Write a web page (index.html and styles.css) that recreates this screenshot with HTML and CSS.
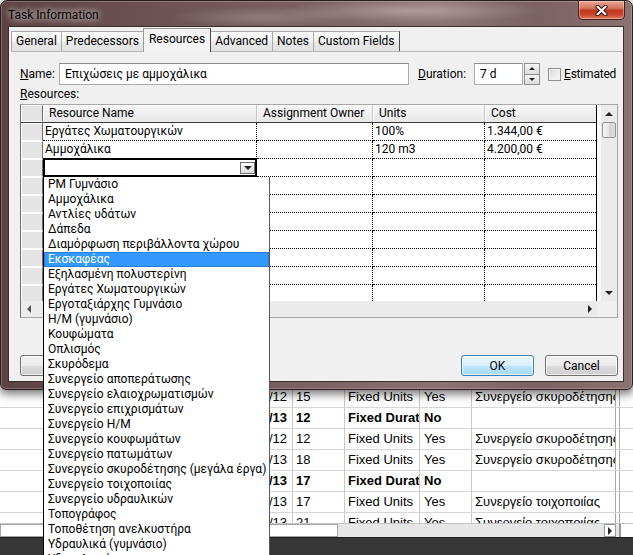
FILE: index.html
```html
<!DOCTYPE html>
<html lang="el">
<head>
<meta charset="utf-8">
<title>Task Information</title>
<link rel="stylesheet" href="styles.css">
</head>
<body>
<div class="desk">
  <div class="bg">
    <div class="bg-cover"></div>
    <div class="bg-grid">
      <div class="bg-row"><span class="b0"></span><span class="b1">3/12/12</span><span class="b2">15</span><span class="b3">Fixed Units</span><span class="b4">Yes</span><span class="b5">Συνεργείο σκυροδέτησης</span><span class="b6"></span><span class="b7"></span></div>
      <div class="bg-row bold"><span class="b0"></span><span class="b1">14/1/13</span><span class="b2">12</span><span class="b3">Fixed Duration</span><span class="b4">No</span><span class="b5"></span><span class="b6"></span><span class="b7"></span></div>
      <div class="bg-row"><span class="b0"></span><span class="b1">12/12/12</span><span class="b2">12</span><span class="b3">Fixed Units</span><span class="b4">Yes</span><span class="b5">Συνεργείο σκυροδέτησης</span><span class="b6"></span><span class="b7"></span></div>
      <div class="bg-row"><span class="b0"></span><span class="b1">7/1/13</span><span class="b2">18</span><span class="b3">Fixed Units</span><span class="b4">Yes</span><span class="b5">Συνεργείο σκυροδέτησης</span><span class="b6"></span><span class="b7"></span></div>
      <div class="bg-row bold"><span class="b0"></span><span class="b1">5/2/13</span><span class="b2">17</span><span class="b3">Fixed Duration</span><span class="b4">No</span><span class="b5"></span><span class="b6"></span><span class="b7"></span></div>
      <div class="bg-row"><span class="b0"></span><span class="b1">11/2/13</span><span class="b2">17</span><span class="b3">Fixed Units</span><span class="b4">Yes</span><span class="b5">Συνεργείο τοιχοποιίας</span><span class="b6"></span><span class="b7"></span></div>
      <div class="bg-row"><span class="b0"></span><span class="b1">4/3/13</span><span class="b2">21</span><span class="b3">Fixed Units</span><span class="b4">Yes</span><span class="b5">Συνεργείο τοιχοποιίας</span><span class="b6"></span><span class="b7"></span></div>
    </div>
    <div class="bg-hscroll"><span class="bh-thumb"></span><span class="bh-track"></span><span class="bh-btn"><i class="tri-r"></i></span><span class="bh-gap"></span><span class="bh-end"></span></div>
    <div class="bg-status"></div>
  </div>

  <div class="dialog">
    <div class="titlebar">
      <span class="title">Task Information</span>
      <div class="close">
        <svg width="13" height="11" viewBox="0 0 13 11"><path d="M2.5 1.8 L10.5 9.2 M10.5 1.8 L2.5 9.2" stroke="#3d1710" stroke-width="4.2" stroke-linecap="round"/><path d="M2.5 1.8 L10.5 9.2 M10.5 1.8 L2.5 9.2" stroke="#ffffff" stroke-width="2.2" stroke-linecap="round"/></svg>
      </div>
    </div>
    <div class="client">
      <div class="tabs">
        <span class="tab">General</span>
        <span class="tab">Predecessors</span>
        <span class="tab active">Resources</span>
        <span class="tab">Advanced</span>
        <span class="tab">Notes</span>
        <span class="tab">Custom Fields</span>
      </div>
      <div class="panel">
        <div class="name-row">
          <span class="lbl-name"><u>N</u>ame:</span>
          <span class="inp inp-name">Επιχώσεις με αμμοχάλικα</span>
          <span class="lbl-dur"><u>D</u>uration:</span>
          <span class="inp inp-dur">7 d</span>
          <span class="spin"><span class="spin-btn"><i class="tri-su"></i></span><span class="spin-btn"><i class="tri-sd"></i></span></span>
          <span class="chk"></span>
          <span class="lbl-est"><u>E</u>stimated</span>
        </div>
        <div class="res-label"><u>R</u>esources:</div>
        <div class="table">
          <div class="t-main">
            <div class="grid">
              <div class="hdr">
                <span class="sel"></span>
                <span class="hc cn">Resource Name</span>
                <span class="hc co">Assignment Owner</span>
                <span class="hc cu">Units</span>
                <span class="hc cc">Cost</span>
              </div>
              <div class="row"><span class="sel"></span><span class="cell cn">Εργάτες Χωματουργικών</span><span class="cell co"></span><span class="cell cu">100%</span><span class="cell cc">1.344,00 €</span></div>
              <div class="row"><span class="sel"></span><span class="cell cn">Αμμοχάλικα</span><span class="cell co"></span><span class="cell cu">120 m3</span><span class="cell cc">4.200,00 €</span></div>
              <div class="row"><span class="sel"></span><span class="cell cn edit"><span class="combo-btn"><i class="tri-d"></i></span></span><span class="cell co"></span><span class="cell cu"></span><span class="cell cc"></span></div>
              <div class="row"><span class="sel"></span><span class="cell cn"></span><span class="cell co"></span><span class="cell cu"></span><span class="cell cc"></span></div>
              <div class="row"><span class="sel"></span><span class="cell cn"></span><span class="cell co"></span><span class="cell cu"></span><span class="cell cc"></span></div>
              <div class="row"><span class="sel"></span><span class="cell cn"></span><span class="cell co"></span><span class="cell cu"></span><span class="cell cc"></span></div>
              <div class="row"><span class="sel"></span><span class="cell cn"></span><span class="cell co"></span><span class="cell cu"></span><span class="cell cc"></span></div>
              <div class="row"><span class="sel"></span><span class="cell cn"></span><span class="cell co"></span><span class="cell cu"></span><span class="cell cc"></span></div>
              <div class="row"><span class="sel"></span><span class="cell cn"></span><span class="cell co"></span><span class="cell cu"></span><span class="cell cc"></span></div>
              <div class="row"><span class="sel"></span><span class="cell cn"></span><span class="cell co"></span><span class="cell cu"></span><span class="cell cc"></span></div>
            </div>
            <div class="vscroll">
              <span class="vs-btn"><i class="tri-u"></i></span>
              <span class="vs-thumb"></span>
              <span class="vs-track"></span>
              <span class="vs-btn"><i class="tri-d"></i></span>
            </div>
          </div>
          <div class="hscroll">
            <span class="hs-btn"><i class="tri-l"></i></span>
            <span class="hs-track"></span>
            <span class="hs-btn"><i class="tri-r"></i></span>
            <span class="hs-corner"></span>
          </div>
        </div>
      </div>
      <div class="btns">
        <span class="btn btn-help"></span>
        <span class="btn btn-ok">OK</span>
        <span class="btn">Cancel</span>
      </div>
    </div>
  </div>

  <div class="dropdown">
    <div class="dd-item">PM Γυμνάσιο</div>
    <div class="dd-item">Αμμοχάλικα</div>
    <div class="dd-item">Αντλίες υδάτων</div>
    <div class="dd-item">Δάπεδα</div>
    <div class="dd-item">Διαμόρφωση περιβάλλοντα χώρου</div>
    <div class="dd-item hl">Εκσκαφέας</div>
    <div class="dd-item">Εξηλασμένη πολυστερίνη</div>
    <div class="dd-item">Εργάτες Χωματουργικών</div>
    <div class="dd-item">Εργοταξιάρχης Γυμνάσιο</div>
    <div class="dd-item">Η/Μ (γυμνάσιο)</div>
    <div class="dd-item">Κουφώματα</div>
    <div class="dd-item">Οπλισμός</div>
    <div class="dd-item">Σκυρόδεμα</div>
    <div class="dd-item">Συνεργείο αποπεράτωσης</div>
    <div class="dd-item">Συνεργείο ελαιοχρωματισμών</div>
    <div class="dd-item">Συνεργείο επιχρισμάτων</div>
    <div class="dd-item">Συνεργείο Η/Μ</div>
    <div class="dd-item">Συνεργείο κουφωμάτων</div>
    <div class="dd-item">Συνεργείο πατωμάτων</div>
    <div class="dd-item">Συνεργείο σκυροδέτησης (μεγάλα έργα)</div>
    <div class="dd-item">Συνεργείο τοιχοποιίας</div>
    <div class="dd-item">Συνεργείο υδραυλικών</div>
    <div class="dd-item">Τοπογράφος</div>
    <div class="dd-item">Τοποθέτηση ανελκυστήρα</div>
    <div class="dd-item">Υδραυλικά (γυμνάσιο)</div>
    <div class="dd-item">Υδραυλικοί</div>
  </div>
</div>
</body>
</html>
```

FILE: styles.css
```css
* { box-sizing: border-box; }
html, body { margin: 0; padding: 0; }
body {
  width: 633px; height: 555px; overflow: hidden; background: #fff;
  font-family: Roboto, "Noto Sans", "DejaVu Sans", sans-serif;
  font-size: 12px; color: #000;
}
i { display: block; font-style: normal; }
.desk { position: relative; width: 633px; height: 555px; overflow: hidden; }

/* ---------- background sheet ---------- */
.bg { display: flex; flex-direction: column; height: 555px; font-family: "Liberation Sans", Arial, sans-serif; font-size: 13px; }
.bg-cover { height: 387px; flex: none; background: #fff; }
.bg-grid { height: 136px; flex: none; overflow: hidden; }
.bg-row { display: flex; height: 21px; border-bottom: 1px solid #d6d6d6; line-height: 20px; white-space: nowrap; }
.bg-row span { overflow: hidden; flex: none; }
.bg-row.bold span { font-weight: bold; }
.b0 { width: 200px; }
.b1 { width: 93px; border-right: 1px solid #c8c8c8; text-align: right; padding-right: 5px; }
.b2 { width: 52px; border-right: 1px solid #c8c8c8; padding-left: 3px; }
.b3 { width: 75px; border-right: 1px solid #c8c8c8; padding-left: 3px; }
.b4 { width: 52px; border-right: 1px solid #c8c8c8; padding-left: 4px; }
.b5 { width: 144px; border-right: 1px solid #a8a8a8; padding-left: 3px; }
.b6 { width: 4px; border-right: 1px solid #a8a8a8; }
.b7 { width: 13px; }
.bg-hscroll { display: flex; height: 14px; flex: none; background: #e6e6e6; border-top: 1px solid #c4c4c4; }
.bh-thumb { width: 338px; background: #fff; border: 1px solid #a6a6a6; }
.bh-track { flex: 1; }
.bh-btn { width: 12px; background: #fff; border: 1px solid #9a9a9a; display: flex; align-items: center; justify-content: center; }
.bh-gap { width: 4px; border-right: 1px solid #9a9a9a; }
.bh-end { width: 13px; background: #fff; border-left: 1px solid #9a9a9a; }
.bg-status { flex: 1; background: #363636; border-top: 1px solid #1c1c1c; }

/* ---------- dialog window ---------- */
.dialog {
  position: absolute; left: 0; top: 0; width: 633px; height: 390px;
  display: flex; flex-direction: column;
  padding: 0 8px 7px 7px;
  border: 1px solid #2b1d1d; border-radius: 7px 7px 6px 6px;
  background:
    radial-gradient(130px 12px at 410px 10px, rgba(255,236,236,.35), transparent),
    radial-gradient(90px 10px at 260px 16px, rgba(255,230,230,.22), transparent),
    linear-gradient(90deg, #5c4242 0%, #6d5353 25%, #7c6262 50%, #8c7272 70%, #7c6262 85%, #8c7171 100%);
  box-shadow: 0 3px 10px 1px rgba(0,0,0,.55), inset 0 0 0 1px rgba(255,255,255,.22);
}
.titlebar { height: 25px; flex: none; display: flex; align-items: flex-start; }
.title { padding-top: 6px; line-height: 16px; text-shadow: 0 0 6px rgba(255,255,255,.9), 0 0 10px rgba(255,255,255,.6); }
.close {
  margin-left: auto; margin-right: -1px; width: 47px; height: 19px;
  border: 1px solid #45221b; border-top: none; border-radius: 0 0 5px 5px;
  background: linear-gradient(#e7a795 0%, #d5745f 40%, #c0391f 52%, #c8442b 75%, #e07a5b 100%);
  display: flex; align-items: center; justify-content: center;
  box-shadow: inset 0 0 0 1px rgba(255,255,255,.35);
}
.client {
  flex: 1; display: flex; flex-direction: column;
  background: #f0f0f0; border: 1px solid #3e2c2c;
}

/* tabs */
.tabs { height: 24px; flex: none; display: flex; align-items: flex-end; padding-left: 2px; }
.tab {
  height: 20px; padding: 0 4px; line-height: 19px; white-space: nowrap;
  border: 1px solid #a9a9a9; border-bottom: none; border-right-color: #4d4d4d;
  margin-right: -1px;
  background: linear-gradient(#fbfbfb, #f1f1f1 50%, #e8e8e8 51%, #e1e1e1);
}
.tab.active {
  height: 24px; margin-bottom: -1px; line-height: 21px; position: relative; z-index: 1;
  background: #f3f3f3; border-color: #9a9a9a; border-right-color: #4d4d4d; padding: 0 5px;
}
.panel { flex: 1; border-top: 1px solid #b6b6b6; margin: 0 1px 0 2px; padding: 11px 0 0 9px; }

/* name row */
.name-row { display: flex; align-items: center; height: 22px; }
.lbl-name { width: 39px; flex: none; }
.inp { flex: none; height: 22px; border: 1px solid #abadb3; border-top-color: #8a8b8f; background: #fff; padding: 0 5px; line-height: 20px; white-space: nowrap; }
.inp-name { width: 350px; }
.lbl-dur { margin-left: 9px; width: 56px; flex: none; }
.inp-dur { width: 49px; }
.spin { flex: none; margin-left: 1px; width: 16px; height: 22px; display: flex; flex-direction: column; }
.spin-btn { flex: 1; border: 1px solid #8e8f8f; background: linear-gradient(#f6f6f6, #dcdcdc); display: flex; align-items: center; justify-content: center; }
.spin-btn + .spin-btn { border-top: none; }
.chk { flex: none; margin-left: 8px; width: 13px; height: 13px; border: 1px solid #8e8f8f; background: linear-gradient(135deg, #d8d8d8, #fbfbfb); box-shadow: inset 0 0 0 1px #f2f2f2; }
.lbl-est { margin-left: 3px; letter-spacing: -0.2px; white-space: nowrap; }
.res-label { margin-top: 2px; line-height: 15px; }

/* table */
.table { margin-top: 2px; width: 598px; height: 214px; border: 1px solid #a7a7a7; border-left-color: #6e6e6e; display: flex; flex-direction: column; background: #fff; }
.t-main { display: flex; height: 196px; flex: none; }
.grid { width: 576px; flex: none; border-right: 1px solid #000; display: flex; flex-direction: column; overflow: hidden; }
.hdr { display: flex; height: 18px; flex: none; border-bottom: 1px solid #3a3a3a; background: linear-gradient(#f7f7f7, #e8e8e8); }
.hc { border-right: 1px solid #c6c6c6; box-shadow: inset 1px 1px 0 #fff; padding-left: 6px; line-height: 17px; white-space: nowrap; overflow: hidden; flex: none; }
.hdr .cc { border-right: none; }
.row { display: flex; height: 18px; flex: none; }
.sel { width: 22px; flex: none; background: #e4e4e4; border: 1px solid #fff; border-right: 1px solid #6e6e6e; }
.cn { width: 214px; }
.co { width: 116px; }
.cu { width: 112px; }
.cc { width: 111px; }
.cell { flex: none; border-bottom: 1px dotted #000; border-right: 1px dotted #000; padding-left: 2px; line-height: 17px; white-space: nowrap; overflow: hidden; }
.cell.cc { border-right: none; }
.cell.edit {
  margin-top: -1px; height: 19px; border: none; box-shadow: inset 0 0 0 2px #000;
  display: flex; align-items: center; justify-content: flex-end; padding-right: 2px;
}
.combo-btn { width: 15px; height: 12px; border: 1px solid #6f6f6f; background: linear-gradient(#fdfdfd, #dcdcdc); display: flex; align-items: center; justify-content: center; }

/* scrollbars */
.vscroll { width: 20px; flex: none; display: flex; flex-direction: column; background: linear-gradient(90deg, #fafafa 4px, #ebebeb 4px); padding-left: 4px; }
.vs-btn { height: 17px; flex: none; display: flex; align-items: center; justify-content: center; }
.vs-thumb { height: 16px; flex: none; margin: 0 1px 0 1px; border: 1px solid #969696; border-radius: 2px; background: linear-gradient(90deg, #f6f6f6, #e4e4e4 50%, #d3d3d3 51%, #dddddd); }
.vs-track { flex: 1; }
.hscroll { display: flex; height: 16px; flex: none; background: #ebebeb; }
.hs-btn { width: 15px; flex: none; display: flex; align-items: center; justify-content: center; }
.hs-track { flex: 1; }
.hs-corner { width: 20px; flex: none; background: #f0f0f0; }

/* triangles */
.tri-u { width: 0; height: 0; border-left: 4px solid transparent; border-right: 4px solid transparent; border-bottom: 4px solid #222; }
.tri-d { width: 0; height: 0; border-left: 4px solid transparent; border-right: 4px solid transparent; border-top: 4px solid #222; }
.tri-l { width: 0; height: 0; border-top: 4px solid transparent; border-bottom: 4px solid transparent; border-right: 4px solid #555; }
.tri-r { width: 0; height: 0; border-top: 4px solid transparent; border-bottom: 4px solid transparent; border-left: 4px solid #222; }
.tri-su { width: 0; height: 0; border-left: 3px solid transparent; border-right: 3px solid transparent; border-bottom: 3px solid #222; }
.tri-sd { width: 0; height: 0; border-left: 3px solid transparent; border-right: 3px solid transparent; border-top: 3px solid #222; }

/* buttons */
.btns { display: flex; height: 26px; flex: none; padding: 0 5px 5px 11px; }
.btn {
  width: 73px; height: 21px; border: 1px solid #707070; border-radius: 3px;
  background: linear-gradient(#f2f2f2, #ebebeb 50%, #dddddd 51%, #cfcfcf);
  display: flex; align-items: center; justify-content: center;
  box-shadow: inset 0 0 0 1px rgba(255,255,255,.75);
}
.btn-help { margin-right: auto; }
.btn-ok { border-color: #3c7fb1; background: linear-gradient(#eaf6fd, #d9f0fc 50%, #bee6fd 51%, #a7d9f5); margin-right: 11px; }

/* dropdown list */
.dropdown {
  position: absolute; left: 43px; top: 177px; width: 227px; height: 400px;
  background: #fff; border: 1px solid #000; border-top: none; border-right-color: #5a5a5a;
}
.dd-item { height: 15px; line-height: 15px; padding-left: 4px; white-space: nowrap; }
.dd-item.hl { background: #3399ff; color: #fff; box-shadow: inset 0 0 0 1px #2a7bd4; }
```
